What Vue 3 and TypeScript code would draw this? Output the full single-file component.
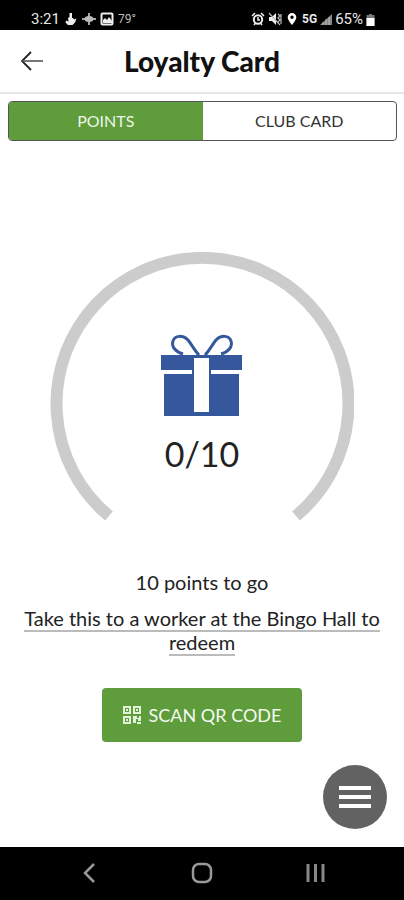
<script setup lang="ts">
import { computed, ref } from 'vue'

type Tab = 'points' | 'club'

const activeTab = ref<Tab>('points')
const points = ref(0)
const goal = 10
const remaining = computed(() => goal - points.value)

const tabs: { id: Tab; label: string }[] = [
  { id: 'points', label: 'POINTS' },
  { id: 'club', label: 'CLUB CARD' },
]
</script>

<template>
  <div class="screen">
    <div class="status">
      <div class="status-group">
        <span class="clock">3:21</span>
        <svg class="glyph" viewBox="0 0 14 14" aria-hidden="true">
          <path d="M5.500 1h2.500v5h1l1 1.500 2.500-1-1.500 4-2.500 2.500H4L1.500 10.500 2 8.500l2.500 1L4 6l1.500-1z" fill="#eee" />
        </svg>
        <svg class="glyph" viewBox="0 0 14 14" aria-hidden="true">
          <path d="M7 1v12M0 7h14" stroke="#ddd" stroke-width="1.5" />
          <ellipse cx="7" cy="7" rx="4.5" ry="3" fill="#bbb" />
        </svg>
        <svg class="glyph" viewBox="0 0 14 14" aria-hidden="true">
          <rect x="1.5" y="1.5" width="11" height="11" rx="1" fill="none" stroke="#eee" stroke-width="2" />
          <path d="M3 11V8l2-2 2 2 2-3 3 4v2z" fill="#eee" />
        </svg>
        <span class="temp">79°</span>
      </div>
      <div class="status-group right">
        <svg class="glyph" viewBox="0 0 14 14" aria-hidden="true">
          <circle cx="7" cy="7.5" r="4.2" fill="none" stroke="#eee" stroke-width="2" />
          <path d="M1 4l3-3M13 4l-3-3M3 13l1.500-2M11 13l-1.500-2M7 5v3h2" stroke="#eee" stroke-width="1.500" fill="none" />
        </svg>
        <svg class="glyph" viewBox="0 0 14 14" aria-hidden="true">
          <path d="M1 5h3l4-4v12L4 9H1z" fill="#eee" />
          <path d="M1 1l11 12M10 2l2 2-2 2 2 2-2 2M13 2v10" stroke="#bbb" stroke-width="1.200" fill="none" />
        </svg>
        <svg class="glyph" viewBox="0 0 14 14" aria-hidden="true">
          <path d="M7 1a4.300 4.300 0 0 0-4.300 4.300C2.700 8.500 7 13 7 13s4.300-4.500 4.300-7.700A4.300 4.300 0 0 0 7 1zm0 2.600a1.700 1.700 0 1 1 0 3.400 1.700 1.700 0 0 1 0-3.400z" fill="#fff" />
        </svg>
        <span class="network">5G</span>
        <svg class="signal" viewBox="0 0 12 12" aria-hidden="true">
          <path d="M0 12L12 1v11z" fill="#888" />
          <path d="M3 12V9M6 12V6M9 12V4" stroke="#bbb" />
        </svg>
        <span class="battery-text">65%</span>
        <svg class="battery" viewBox="0 0 9 13" aria-hidden="true">
          <path d="M3 1h3v1h2.500v11h-8V2H3z" fill="#777" />
          <path d="M.5 5h8v8h-8z" fill="#fff" />
        </svg>
      </div>
    </div>

    <header class="header">
      <button class="back" type="button" aria-label="Back">
        <svg viewBox="0 0 24 20" aria-hidden="true">
          <path d="M11 1L2 10l9 9" fill="none" stroke="#222" stroke-width="1.800" />
          <path d="M2 10h21" fill="none" stroke="#555" stroke-width="1.600" />
        </svg>
      </button>
      <h1 class="title">Loyalty Card</h1>
    </header>

    <div class="tabs" role="tablist">
      <button
        v-for="tab in tabs"
        :key="tab.id"
        class="tab"
        :class="{ active: activeTab === tab.id }"
        type="button"
        role="tab"
        :aria-selected="activeTab === tab.id"
        @click="activeTab = tab.id"
      >
        {{ tab.label }}
      </button>
    </div>

    <main class="content">
      <div class="gauge">
        <svg class="ring" viewBox="0 0 304 270" aria-hidden="true">
          <path d="M59 264A146 146 0 1 1 246 264" fill="none" stroke="#ccc" stroke-width="12" />
        </svg>
        <div class="gauge-body">
          <svg class="gift" viewBox="0 0 82 82" aria-hidden="true">
            <path
              d="M38 21C34 17 31 11 27 6C22 1 14 1 12 7C10 13 15 18 22 20M44 21C48 17 51 11 55 6C60 1 68 1 70 7C72 13 67 18 60 20"
              fill="none"
              stroke="#35579b"
              stroke-width="3"
            />
            <path d="M0 21h81v15H50v4h28v42H3V40h28v-4H0z" fill="#35579b" />
            <path d="M33 24h15v54H33z" fill="#fff" />
          </svg>
          <span class="score">{{ points }}/{{ goal }}</span>
        </div>
      </div>

      <p class="remaining">{{ remaining }} points to go</p>
      <p class="redeem"><a href="#redeem">Take this to a worker at the Bingo Hall to redeem</a></p>

      <button class="scan" type="button">
        <svg class="qr" viewBox="0 0 18 18" aria-hidden="true">
          <path d="M1 1h6v6H1zM11 1h6v6h-6zM1 11h6v6H1z" fill="none" stroke="#e4f1d9" stroke-width="2" />
          <path d="M3 3h2v2H3zM13 3h2v2h-2zM3 13h2v2H3zM10 10h4v2h2v-2h2v5h-3v-2h-2v4h-3zM14 16h4v2h-4z" fill="#e4f1d9" />
        </svg>
        <span>SCAN QR CODE</span>
      </button>
    </main>

    <div class="bottom">
      <button class="menu" type="button" aria-label="Menu">
        <svg viewBox="0 0 32 22" aria-hidden="true">
          <path d="M0 2h32M0 11h32M0 20h32" stroke="#fff" stroke-width="4" />
        </svg>
      </button>
      <nav class="system" aria-label="System navigation">
        <button type="button" aria-label="Go back">
          <svg viewBox="0 0 22 22" aria-hidden="true">
            <path d="M16 2L7 11l9 9" fill="none" stroke="#999" stroke-width="2.500" />
          </svg>
        </button>
        <button type="button" aria-label="Home">
          <svg viewBox="0 0 22 22" aria-hidden="true">
            <rect x="2" y="2" width="18" height="18" rx="6" fill="none" stroke="#999" stroke-width="2.500" />
          </svg>
        </button>
        <button type="button" aria-label="Recent apps">
          <svg viewBox="0 0 22 22" aria-hidden="true">
            <path d="M4 2v18M11.500 2v18M19 2v18" stroke="#888" stroke-width="3" />
          </svg>
        </button>
      </nav>
    </div>
  </div>
</template>

<style>
body {
  background: #fff;
}
</style>

<style scoped>
.screen {
  display: flex;
  flex-direction: column;
  min-height: 100vh;
  color: #222;
  background: #fff;
  font-family: Lato, "Liberation Sans", sans-serif;
}

button {
  padding: 0;
  border: 0;
  background: none;
  color: inherit;
  font: inherit;
  cursor: pointer;
}

svg {
  display: block;
}

.status {
  display: flex;
  align-items: center;
  justify-content: space-between;
  height: 22px;
  padding: 8px 29px 0 31px;
  background: #000;
  color: #e8e8e8;
  font-family: Roboto, sans-serif;
  font-size: 15px;
  line-height: 20px;
}

.status-group {
  display: flex;
  align-items: center;
  gap: 4px;
}

.status-group.right {
  gap: 3px;
}

.glyph {
  width: 14px;
  height: 14px;
}

.temp {
  color: #bbb;
  font-size: 12px;
}

.network {
  font-size: 12px;
  font-weight: 700;
}

.signal {
  width: 12px;
  height: 12px;
}

.battery {
  width: 9px;
  height: 13px;
}

.header {
  display: grid;
  grid-template-columns: 64px 1fr 64px;
  align-items: center;
  height: 62px;
  border-bottom: 2px solid #e6e6e6;
}

.back {
  display: flex;
  justify-content: center;
}

.back svg {
  width: 24px;
  height: 20px;
}

.title {
  margin: 0;
  color: #111;
  font-size: 28px;
  font-weight: 900;
  line-height: 32px;
  text-align: center;
}

.tabs {
  display: flex;
  margin: 7px 7px 0 8px;
  overflow: hidden;
  border: 1px solid #555;
  border-radius: 4px;
}

.tab {
  flex: 1;
  height: 38px;
  color: #333;
  font-size: 16px;
  line-height: 20px;
}

.tab.active {
  background: #5f9c3c;
  color: #eef6e8;
}

.content {
  display: flex;
  flex-direction: column;
  align-items: center;
  padding: 111px 20px 0;
}

.gauge {
  display: grid;
  justify-items: center;
  width: 304px;
  max-width: 100%;
}

.ring,
.gauge-body {
  grid-area: 1 / 1;
}

.ring {
  width: 100%;
}

.gauge-body {
  display: flex;
  flex-direction: column;
  align-items: center;
  gap: 16px;
  padding-top: 82px;
}

.gift {
  width: 82px;
  height: 82px;
}

.score {
  font-size: 34px;
  line-height: 44px;
}

.remaining,
.redeem {
  margin: 0;
  font-size: 20px;
  line-height: 24px;
  text-align: center;
}

.remaining {
  margin-top: 48px;
}

.redeem {
  margin-top: 12px;
}

.redeem a {
  border-bottom: 2px solid #bbb;
  color: inherit;
  text-decoration: none;
}

.scan {
  display: flex;
  align-items: center;
  gap: 8px;
  height: 54px;
  margin-top: 34px;
  padding: 0 21px;
  border-radius: 4px;
  background: #5f9c3c;
  color: #f4faf0;
  font-size: 18px;
  line-height: 24px;
}

.qr {
  width: 18px;
  height: 18px;
}

.bottom {
  display: flex;
  flex-direction: column;
  margin-top: auto;
}

.menu {
  display: grid;
  place-items: center;
  align-self: flex-end;
  width: 64px;
  height: 64px;
  margin: 0 17px 18px 0;
  border-radius: 50%;
  background: #626262;
}

.menu svg {
  width: 32px;
  height: 22px;
}

.system {
  display: flex;
  justify-content: space-around;
  height: 51px;
  padding: 0 32px 2px;
  background: #000;
}

.system button {
  display: grid;
  flex: 1;
  place-items: center;
}

.system svg {
  width: 22px;
  height: 22px;
}
</style>
